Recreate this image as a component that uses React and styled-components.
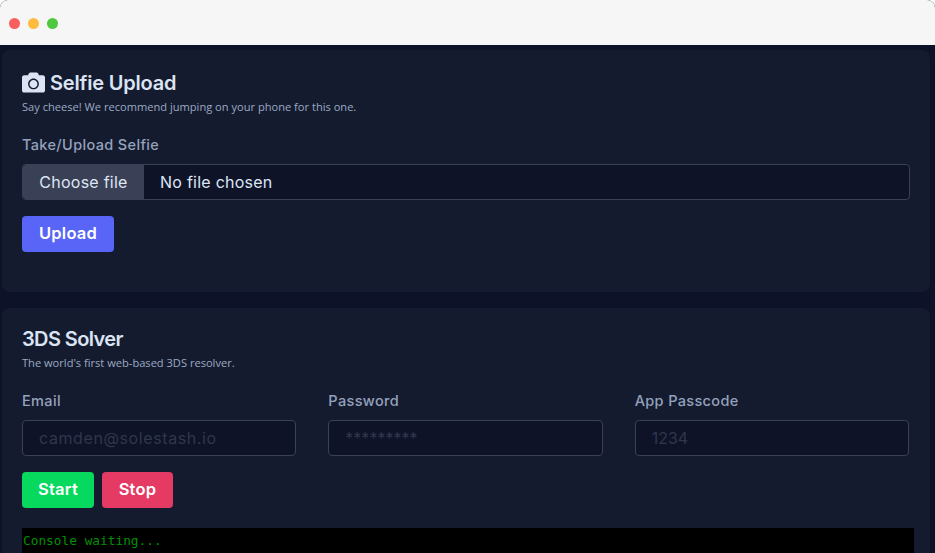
import React from "react";
import styled, { createGlobalStyle } from "styled-components";
import { FaCamera } from "react-icons/fa";

const Global = createGlobalStyle`
  html, body { margin: 0; padding: 0; background: #fff; height: 100%; overflow: hidden; }
  #root { height: 100%; }
  * { box-sizing: border-box; }
`;

const sans = `Inter, "Noto Sans", sans-serif`;

const Frame = styled.div`
  height: 553px;
  overflow: hidden;
  border-radius: 8px 8px 0 0;
  background: #0d1228;
  font-family: ${sans};
`;
const TitleBar = styled.div`
  height: 45px;
  background: #f6f6f6;
  display: flex;
  align-items: center;
  gap: 8px;
  padding: 1px 0 0 9px;
`;
const Dot = styled.span`
  width: 11px;
  height: 11px;
  border-radius: 50%;
  background: ${p => p.$color};
`;
const Content = styled.main`
  display: flex;
  flex-direction: column;
  gap: 16px;
  padding: 5px 5px 0 2px;
`;
const Card = styled.section`
  background: #151b2f;
  border-radius: 8px;
  padding: ${p => p.$top}px 20px 20px;
  min-height: ${p => p.$minH || "auto"};
`;
const Title = styled.h2`
  margin: 0;
  display: flex;
  align-items: center;
  gap: 5px;
  font-size: 20px;
  line-height: 30px;
  font-weight: 600;
  letter-spacing: ${p => p.$spacing || "-0.2px"};
  color: #dbe4f3;
  svg { width: 23px; height: 23px; margin-top: -2px; flex: none; }
`;
const Subtitle = styled.p`
  margin: 1px 0 0;
  font-family: "Open Sans", sans-serif;
  font-size: 11.1px;
  line-height: 16px;
  color: #9baac2;
`;
const Label = styled.div`
  font-size: 14.5px;
  line-height: 20px;
  font-weight: 500;
  letter-spacing: 0.35px;
  color: #94a2bc;
  margin-bottom: 9px;
`;
const UploadLabel = styled(Label)`
  margin-top: 20px;
`;
const FileField = styled.div`
  display: flex;
  height: 36px;
  border: 1px solid #3a4055;
  border-radius: 4px;
  overflow: hidden;
  background: #0e1328;
  font-size: 16px;
  letter-spacing: 0.25px;
  color: #dde6f5;
`;
const FileButton = styled.span`
  width: 121px;
  background: #3a4055;
  display: flex;
  align-items: center;
  justify-content: center;
  flex: none;
`;
const FileName = styled.span`
  padding-left: 16px;
  display: flex;
  align-items: center;
`;
const Button = styled.button`
  height: 36px;
  width: ${p => p.$w}px;
  border: none;
  border-radius: 4px;
  background: ${p => p.$bg};
  color: #fff;
  font-family: ${sans};
  font-size: 16.5px;
  font-weight: 600;
  letter-spacing: 0.25px;
  padding: 0 0 2px;
`;
const UploadButton = styled(Button)`
  display: block;
  margin-top: 16px;
`;
const Fields = styled.div`
  display: grid;
  grid-template-columns: repeat(3, 274.33px);
  column-gap: 32px;
  margin-top: 20px;
`;
const Field = styled.div`
  display: flex;
  flex-direction: column;
`;
const Input = styled.input`
  height: 36px;
  width: 100%;
  background: #0e1328;
  border: 1px solid #3a4055;
  border-radius: 4px;
  padding: 0 16px 1px;
  font-family: ${sans};
  font-size: 16px;
  letter-spacing: ${p => p.$spacing || "0"};
  color: #dde6f5;
  &::placeholder { color: #30374c; opacity: 1; }
`;
const Actions = styled.div`
  display: flex;
  gap: 8px;
  margin-top: 16px;
`;
const Console = styled.pre`
  margin: 20px -4px 0 0;
  background: #000;
  color: #009000;
  font-family: "DejaVu Sans Mono", monospace;
  font-size: 12.8px;
  line-height: 18px;
  padding: 4px 1px;
  height: 200px;
`;

export default function App() {
  return (
    <>
      <Global />
      <Frame>
        <TitleBar>
          <Dot $color="#f85f5f" />
          <Dot $color="#fdbc40" />
          <Dot $color="#4ec83f" />
        </TitleBar>
        <Content>
          <Card $top={18} $minH="242px">
            <Title><FaCamera />Selfie Upload</Title>
            <Subtitle>Say cheese! We recommend jumping on your phone for this one.</Subtitle>
            <UploadLabel>Take/Upload Selfie</UploadLabel>
            <FileField>
              <FileButton>Choose file</FileButton>
              <FileName>No file chosen</FileName>
            </FileField>
            <UploadButton $w={92} $bg="#5865f6">Upload</UploadButton>
          </Card>
          <Card $top={16}>
            <Title $spacing="-0.6px">3DS Solver</Title>
            <Subtitle>The world's first web-based 3DS resolver.</Subtitle>
            <Fields>
              <Field>
                <Label>Email</Label>
                <Input $spacing="0.6px" placeholder="camden@solestash.io" />
              </Field>
              <Field>
                <Label>Password</Label>
                <Input placeholder="*********" />
              </Field>
              <Field>
                <Label>App Passcode</Label>
                <Input placeholder="1234" />
              </Field>
            </Fields>
            <Actions>
              <Button $w={72} $bg="#07d95f">Start</Button>
              <Button $w={71} $bg="#e43a63">Stop</Button>
            </Actions>
            <Console>Console waiting...</Console>
          </Card>
        </Content>
      </Frame>
    </>
  );
}
